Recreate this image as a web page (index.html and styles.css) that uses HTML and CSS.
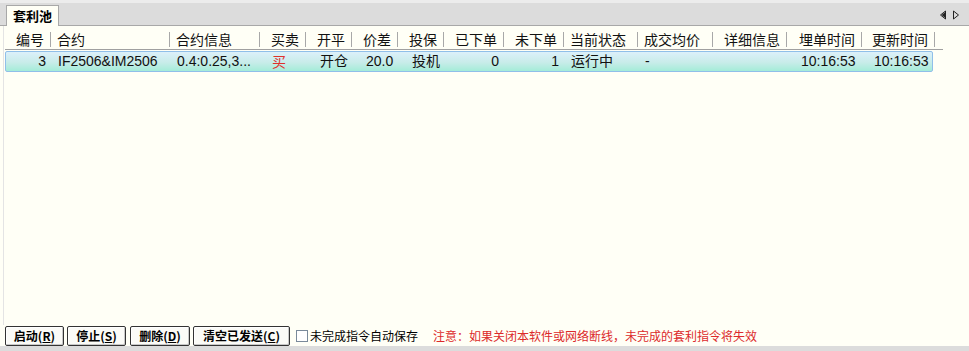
FILE: index.html
```html
<!DOCTYPE html>
<html lang="zh">
<head>
<meta charset="utf-8">
<link rel="stylesheet" href="styles.css">
</head>
<body>
<div class="app">
  <div class="tabbar">
    <div class="tab">套利池</div>
    <div class="arrows">
      <svg width="8" height="10" viewBox="0 0 8 10"><path d="M6.5 1 L1.5 5 L6.5 9 Z" fill="none" stroke="#222" stroke-width="1"/><path d="M6 2.2 L2.6 5 L6 7.8Z" fill="#222"/></svg>
      <svg width="8" height="10" viewBox="0 0 8 10"><path d="M1.5 1 L6.5 5 L1.5 9 Z" fill="none" stroke="#222" stroke-width="1"/></svg>
    </div>
  </div>
  <div class="list">
    <div class="grid head">
      <div class="c r">编号</div>
      <div class="c l">合约</div>
      <div class="c l">合约信息</div>
      <div class="c r">买卖</div>
      <div class="c r">开平</div>
      <div class="c r">价差</div>
      <div class="c r">投保</div>
      <div class="c r">已下单</div>
      <div class="c r">未下单</div>
      <div class="c l">当前状态</div>
      <div class="c l">成交均价</div>
      <div class="c r">详细信息</div>
      <div class="c r">埋单时间</div>
      <div class="c r">更新时间</div>
    </div>
    <div class="grid row">
      <div class="c r">3</div>
      <div class="c l">IF2506&amp;IM2506</div>
      <div class="c l">0.4:0.25,3...</div>
      <div class="c l pad12 red">买</div>
      <div class="c l pad13">开仓</div>
      <div class="c l pad13">20.0</div>
      <div class="c l pad13">投机</div>
      <div class="c r">0</div>
      <div class="c r">1</div>
      <div class="c l">运行中</div>
      <div class="c l">-</div>
      <div class="c l"></div>
      <div class="c l pad13">10:16:53</div>
      <div class="c l pad11">10:16:53</div>
    </div>
  </div>
  <div class="toolbar">
    <button class="btn w59">启动(<u>R</u>)</button>
    <button class="btn w59">停止(<u>S</u>)</button>
    <button class="btn w60">删除(<u>D</u>)</button>
    <button class="btn w97">清空已发送(<u>C</u>)</button>
    <label class="chk"><span class="box"></span>未完成指令自动保存</label>
    <span class="note">注意：如果关闭本软件或网络断线，未完成的套利指令将失效</span>
  </div>
  <div class="footer"></div>
</div>
</body>
</html>
```

FILE: styles.css
```css
* { box-sizing: border-box; }
html, body { margin: 0; padding: 0; }
body {
  width: 969px;
  height: 351px;
  overflow: hidden;
  background: #fffff6;
  font-family: "Liberation Sans", "Noto Sans CJK SC", sans-serif;
  font-size: 14px;
  color: #111;
}
.app {
  display: flex;
  flex-direction: column;
  height: 351px;
}
.tabbar {
  height: 26px;
  background: #dcdcdc;
  border-top: 3px solid #ececec;
  border-bottom: 1px solid #a8a8a8;
  display: flex;
  align-items: flex-end;
}
.tab {
  margin-left: 6px;
  margin-bottom: -1px;
  height: 21px;
  width: 53px;
  border: 1px solid #a8a8a8;
  border-bottom: none;
  background: #fffff6;
  font-family: "Noto Sans CJK SC", sans-serif;
  font-weight: bold;
  font-size: 13px;
  line-height: 19px;
  padding-left: 6px;
  color: #000;
}
.arrows {
  margin-left: auto;
  margin-right: 9px;
  align-self: center;
  display: flex;
  gap: 5px;
  padding-top: 2px;
}
.arrows svg { display: block; }
.list {
  flex: 1;
  border-left: 1px solid #e4e4e4;
  margin-left: 3px;
  padding-left: 1px;
}
.grid {
  display: grid;
  grid-template-columns: 46px 119px 90px 46px 46px 46px 46px 60px 60px 74px 75px 74px 75px 73px;
}
.head {
  height: 24px;
  width: 938px;
  border-bottom: 1px solid #a0a0a0;
  font-family: "Noto Sans CJK SC", sans-serif;
  font-size: 14px;
  align-items: start;
}
.head .c {
  border-right: 1px solid #a8a8a8;
  height: 15px;
  margin-top: 6px;
  line-height: 15px;
  overflow: visible;
}
.c { white-space: nowrap; }
.row .c { overflow: hidden; }
.c.r { text-align: right; padding-right: 6px; }
.c.l { text-align: left; padding-left: 6px; }
.row {
  margin-top: 1px;
  width: 928px;
  height: 21px;
  border: 1px solid #90bfe9;
  border-radius: 2px;
  background: linear-gradient(to bottom, #dcf0fa 0%, #c8ece9 55%, #a4ecd8 100%);
  line-height: 19px;
}
.row .c:first-child { margin-left: -1px; }
.pad13.l { padding-left: 13px; }
.pad12.l { padding-left: 11px; }
.pad11.l { padding-left: 11px; }
.red { color: #e0302c; font-family: "Noto Sans CJK SC", sans-serif; }
.toolbar {
  height: 21px;
  display: flex;
  align-items: center;
  padding-left: 5px;
  gap: 3px;
}
.btn {
  height: 20px;
  padding: 0;
  margin: 0;
  border: 1px solid #333;
  border-radius: 2px;
  box-shadow: inset 1px 1px 0 #fff, inset -1px -1px 0 #c8c8c8;
  background: #fbfbf7;
  font-family: "Noto Sans CJK SC", sans-serif;
  font-weight: bold;
  font-size: 12px;
  line-height: 18px;
  color: #000;
  text-align: center;
}
.btn u { text-decoration: underline; text-underline-offset: 1px; }
.w59 { width: 59px; }
.w60 { width: 60px; margin-left: 1px; }
.w97 { width: 97px; }
.chk {
  display: flex;
  align-items: center;
  font-family: "Noto Sans CJK SC", sans-serif;
  font-size: 12px;
  color: #000;
  margin-left: 3px;
}
.box {
  width: 12px;
  height: 12px;
  border: 1px solid #7a8a9a;
  background: #fff;
  margin-right: 2px;
}
.note {
  margin-left: 12px;
  font-family: "Noto Sans CJK SC", sans-serif;
  font-size: 12px;
  color: #dc2a2a;
}
.footer {
  height: 5px;
  background: #dcdcdc;
}
```
